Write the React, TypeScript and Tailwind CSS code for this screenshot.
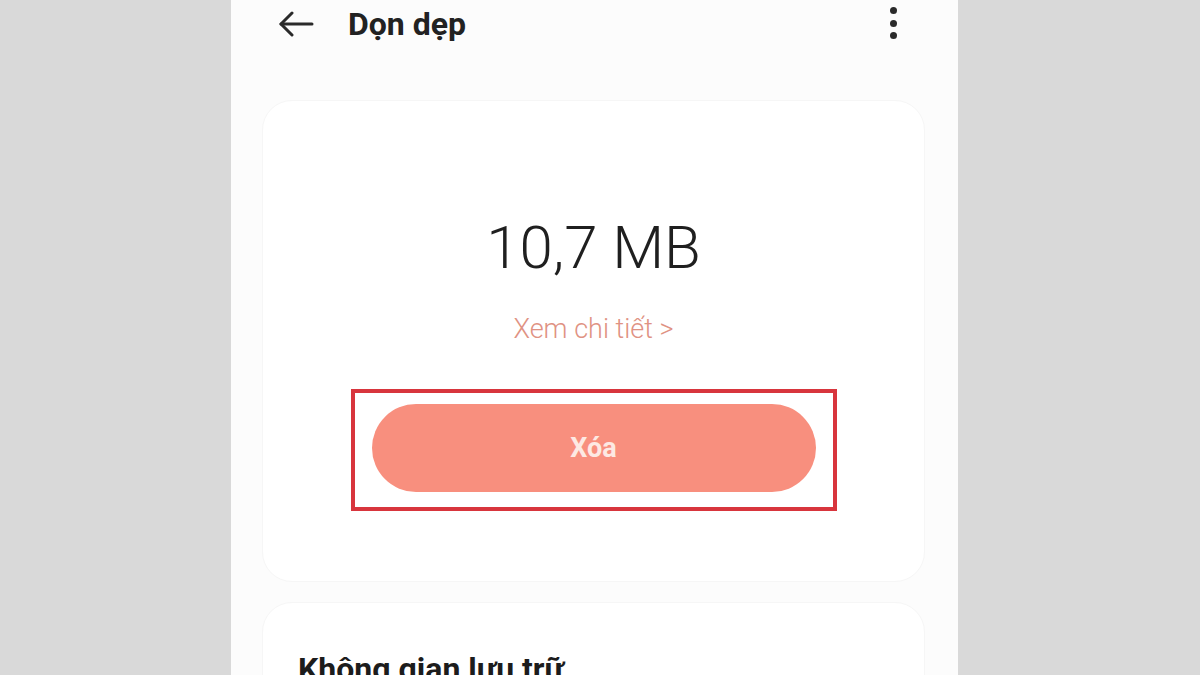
export default function App() {
  const font = { fontFamily: 'Roboto, "Noto Sans", sans-serif' }

  return (
    <div className="w-[1200px] h-[675px] overflow-hidden bg-[#d9d9d9] pl-[231px]" style={font}>
      <div className="w-[727px] h-[675px] overflow-hidden bg-[#fcfcfc] flex flex-col">
        {/* header */}
        <div className="h-[48px] shrink-0 flex items-center pl-[47px] pr-[61px]">
          <svg width="36" height="26" viewBox="0 0 36 26" fill="none" stroke="#2a2a2a" strokeWidth="3" strokeLinecap="round" strokeLinejoin="round">
            <path d="M34 13H3" />
            <path d="M14 2L3 13l11 11" />
          </svg>
          <div className="ml-[34px] text-[32px] font-bold leading-none text-[#222] -mt-[1px]">Dọn dẹp</div>
          <div className="ml-auto flex flex-col gap-[5.5px] items-center -mt-[2px]">
            <span className="w-[7px] h-[7px] rounded-full bg-[#2a2a2a]" />
            <span className="w-[7px] h-[7px] rounded-full bg-[#2a2a2a]" />
            <span className="w-[7px] h-[7px] rounded-full bg-[#2a2a2a]" />
          </div>
        </div>

        {/* cleanup card */}
        <div className="mt-[52px] mx-[31px] w-[663px] h-[482px] shrink-0 rounded-[30px] bg-white border border-[#f6f6f6] flex flex-col items-center pt-[117px]">
          <div className="text-[60px] font-light leading-none text-[#1f1f1f]">10,7 MB</div>
          <div className="mt-[38px] text-[27px] font-light leading-none text-[#df9283]">Xem chi tiết &gt;</div>
          <div className="mt-[46px] border-4 border-[#d8353d] pt-[11px] pb-[15px] px-[17px]">
            <button className="w-[444px] h-[88px] rounded-full bg-[#f88f7e] text-[#fde9e3] text-[27px] font-bold">
              Xóa
            </button>
          </div>
        </div>

        {/* storage card */}
        <div className="mt-[20px] mx-[31px] w-[663px] h-[200px] shrink-0 rounded-[30px] bg-white border border-[#f6f6f6] pl-[35px] pt-[50px]">
          <div className="text-[32px] font-bold leading-none text-[#1c1c1c]">Không gian lưu trữ</div>
        </div>
      </div>
    </div>
  )
}
